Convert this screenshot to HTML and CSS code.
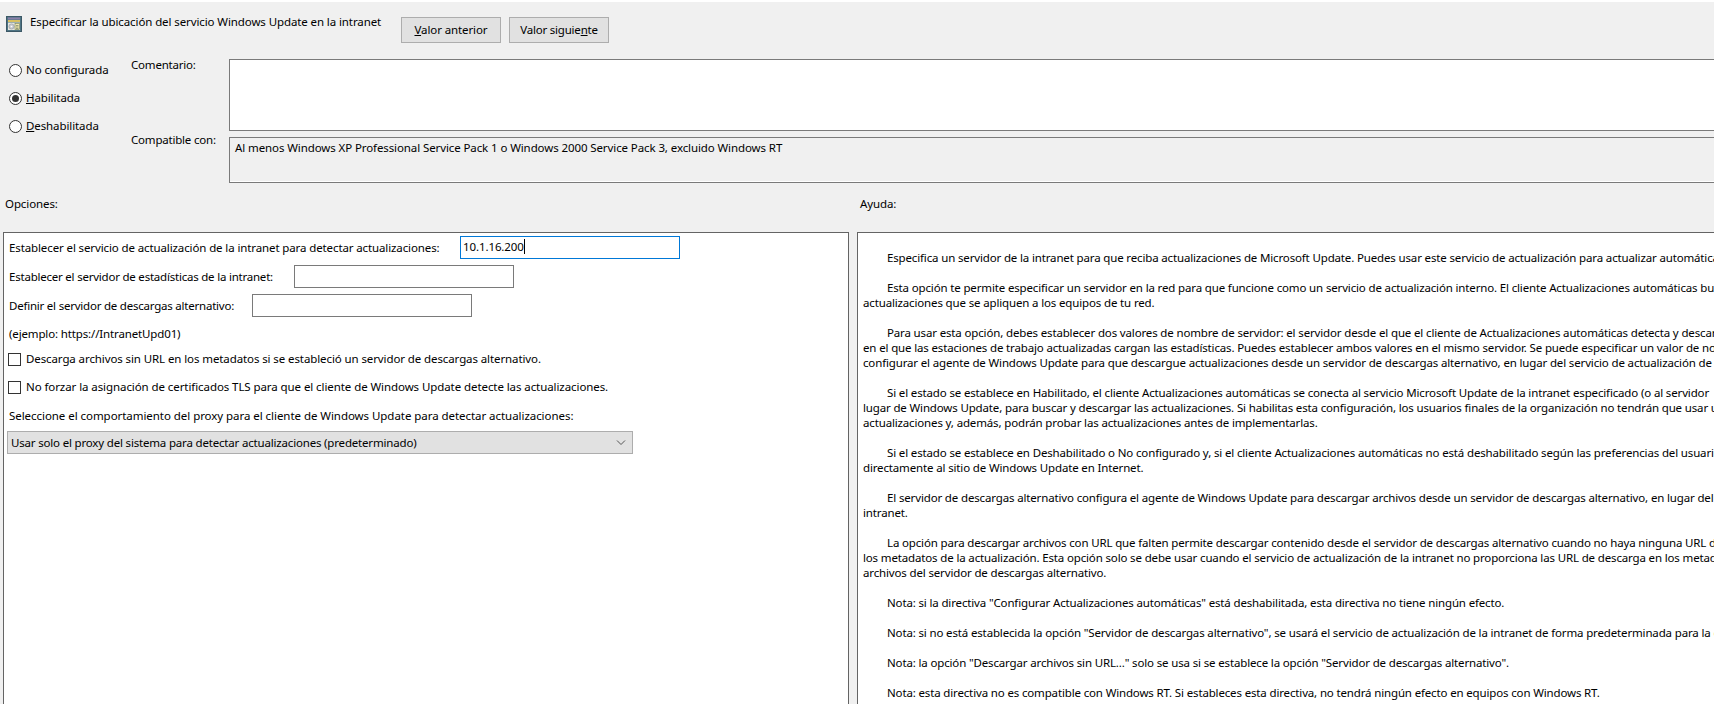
FILE: index.html
```html
<!DOCTYPE html>
<html lang="es">
<head>
<meta charset="utf-8">
<title>Especificar la ubicación del servicio Windows Update en la intranet</title>
<link rel="stylesheet" href="styles.css">
</head>
<body>
<div class="window">
  <header class="header">
    <svg class="policy-icon" width="16" height="16" viewBox="0 0 16 16" aria-hidden="true">
      <rect x="0.5" y="0.5" width="15" height="15" fill="#4f7484" stroke="#3c5866"/>
      <rect x="2" y="1.5" width="12" height="2" fill="#8a7fa8"/>
      <rect x="2" y="4" width="12" height="2" fill="#d8c060"/>
      <rect x="2" y="6.5" width="12" height="7.5" fill="#e8e8e0"/>
      <circle cx="5.5" cy="10.5" r="2.6" fill="#c9ccd0" stroke="#8e9298" stroke-width=".6"/>
      <circle cx="5.5" cy="10.5" r=".8" fill="#fff"/>
      <rect x="9" y="7.5" width="4.5" height="6" fill="#f4e9b0" stroke="#6a7a50" stroke-width=".6"/>
      <path d="M10 9.5h2.5M10 11h2.5M10 12.5h2.5" stroke="#5b6b5a" stroke-width=".6"/>
    </svg>
    <h1 class="title">Especificar la ubicación del servicio Windows Update en la intranet</h1>
    <div class="nav-buttons">
      <button class="btn" type="button"><u>V</u>alor anterior</button>
      <button class="btn btn-tight" type="button">Valor siguie<u>n</u>te</button>
    </div>
  </header>

  <section class="settings">
    <div class="state">
      <label class="radio"><span class="radio-dot"></span><span>No confi<u>g</u>urada</span></label>
      <label class="radio"><span class="radio-dot is-on"></span><span><u>H</u>abilitada</span></label>
      <label class="radio"><span class="radio-dot"></span><span><u>D</u>eshabilitada</span></label>
    </div>
    <div class="meta">
      <div class="meta-label">Comentario:</div>
      <div class="comment"></div>
      <div class="meta-label">Compatible con:</div>
      <div class="compat">Al menos Windows XP Professional Service Pack 1 o Windows 2000 Service Pack 3, excluido Windows RT</div>
    </div>
  </section>

  <div class="captions">
    <div class="caption-left">Opciones:</div>
    <div class="caption-right">Ayuda:</div>
  </div>

  <main class="panels">
    <section class="panel options">
      <div class="field-row"><span class="lbl lbl-1">Establecer el servicio de actualización de la intranet para detectar actualizaciones:</span><div class="input is-focus">10.1.16.200<span class="caret"></span></div></div>
      <div class="field-row"><span class="lbl lbl-2">Establecer el servidor de estadísticas de la intranet:</span><div class="input"></div></div>
      <div class="field-row"><span class="lbl lbl-3">Definir el servidor de descargas alternativo:</span><div class="input"></div></div>
      <div class="note">(ejemplo: https://IntranetUpd01)</div>
      <label class="check"><span class="check-box"></span><span>Descarga archivos sin URL en los metadatos si se estableció un servidor de descargas alternativo.</span></label>
      <label class="check"><span class="check-box"></span><span>No forzar la asignación de certificados TLS para que el cliente de Windows Update detecte las actualizaciones.</span></label>
      <div class="proxy-label">Seleccione el comportamiento del proxy para el cliente de Windows Update para detectar actualizaciones:</div>
      <div class="select">
        <span>Usar solo el proxy del sistema para detectar actualizaciones (predeterminado)</span>
        <svg width="10" height="6" viewBox="0 0 10 6" aria-hidden="true"><path d="M1 .5 5 4.5 9 .5" fill="none" stroke="#555" stroke-width="1"/></svg>
      </div>
    </section>
    <section class="panel help">
      <p class="line first">Especifica un servidor de la intranet para que reciba actualizaciones de Microsoft Update. Puedes usar este servicio de actualización para actualizar automática</p>
      <p class="line">Esta opción te permite especificar un servidor en la red para que funcione como un servicio de actualización interno. El cliente Actualizaciones automáticas bu</p>
      <p class="cont">actualizaciones que se apliquen a los equipos de tu red.</p>
      <p class="line">Para usar esta opción, debes establecer dos valores de nombre de servidor: el servidor desde el que el cliente de Actualizaciones automáticas detecta y descarg</p>
      <p class="cont">en el que las estaciones de trabajo actualizadas cargan las estadísticas. Puedes establecer ambos valores en el mismo servidor. Se puede especificar un valor de nor</p>
      <p class="cont">configurar el agente de Windows Update para que descargue actualizaciones desde un servidor de descargas alternativo, en lugar del servicio de actualización de l</p>
      <p class="line">Si el estado se establece en Habilitado, el cliente Actualizaciones automáticas se conecta al servicio Microsoft Update de la intranet especificado (o al servidor</p>
      <p class="cont">lugar de Windows Update, para buscar y descargar las actualizaciones. Si habilitas esta configuración, los usuarios finales de la organización no tendrán que usar u</p>
      <p class="cont">actualizaciones y, además, podrán probar las actualizaciones antes de implementarlas.</p>
      <p class="line">Si el estado se establece en Deshabilitado o No configurado y, si el cliente Actualizaciones automáticas no está deshabilitado según las preferencias del usuari</p>
      <p class="cont">directamente al sitio de Windows Update en Internet.</p>
      <p class="line">El servidor de descargas alternativo configura el agente de Windows Update para descargar archivos desde un servidor de descargas alternativo, en lugar del s</p>
      <p class="cont">intranet.</p>
      <p class="line">La opción para descargar archivos con URL que falten permite descargar contenido desde el servidor de descargas alternativo cuando no haya ninguna URL d</p>
      <p class="cont">los metadatos de la actualización. Esta opción solo se debe usar cuando el servicio de actualización de la intranet no proporciona las URL de descarga en los metad</p>
      <p class="cont">archivos del servidor de descargas alternativo.</p>
      <p class="line">Nota: si la directiva "Configurar Actualizaciones automáticas" está deshabilitada, esta directiva no tiene ningún efecto.</p>
      <p class="line">Nota: si no está establecida la opción "Servidor de descargas alternativo", se usará el servicio de actualización de la intranet de forma predeterminada para la d</p>
      <p class="line">Nota: la opción "Descargar archivos sin URL..." solo se usa si se establece la opción "Servidor de descargas alternativo".</p>
      <p class="line">Nota: esta directiva no es compatible con Windows RT. Si estableces esta directiva, no tendrá ningún efecto en equipos con Windows RT.</p>
    </section>
  </main>
</div>
</body>
</html>
```
FILE: styles.css
```css
* { box-sizing: border-box; }
html, body { margin: 0; padding: 0; height: 704px; overflow: hidden; }
body { background: #fff; font-family: "Noto Sans", "Open Sans", sans-serif; font-size: 11.5px; line-height: 16px; letter-spacing: -0.1px; color: #000; }

.window { width: 1714px; height: 702px; margin-top: 2px; background: #f0f0f0; overflow: hidden; }

.header { display: flex; align-items: flex-start; height: 54px; padding-left: 6px; }
.policy-icon { margin-top: 14px; flex: none; }
.title { margin: 12px 0 0 8px; width: 350px; flex: none; font-size: inherit; font-weight: 400; line-height: 16px; white-space: nowrap; }
.nav-buttons { display: flex; gap: 8px; margin: 15px 0 0 21px; }
.btn { width: 100px; height: 26px; padding: 0; background: #e1e1e1; border: 1px solid #adadad; font: inherit; letter-spacing: -0.1px; color: #000; }
.btn-tight { letter-spacing: -0.2px; }

.settings { display: flex; width: 1900px; }
.state { width: 131px; padding-left: 9px; flex: none; }
.radio { display: flex; align-items: center; gap: 4px; height: 28px; }
.radio-dot { width: 13px; height: 13px; border: 1px solid #333; border-radius: 50%; background: #fff; flex: none; display: flex; align-items: center; justify-content: center; }
.radio-dot.is-on::after { content: ""; width: 7px; height: 7px; border-radius: 50%; background: #333; }

.meta { flex: 1; display: grid; grid-template-columns: 98px 1fr; grid-template-rows: 75px 52px; }
.meta-label { padding-top: 1px; white-space: nowrap; letter-spacing: -0.2px; }
.comment { margin-top: 3px; height: 72px; background: #fff; border: 1px solid #7a7a7a; }
.compat { margin-top: 6px; height: 46px; padding: 2px 5px; background: #f0f0f0; border: 1px solid #7a7a7a; box-shadow: inset 0 -1px 0 #fff; white-space: nowrap; }

.captions { display: flex; padding-top: 13px; height: 49px; }
.caption-left { width: 860px; padding-left: 5px; }

.panels { display: flex; gap: 8px; margin-left: 3px; width: 1800px; }
.panel { height: 520px; border: 1px solid #646464; background: #fff; flex: none; overflow: hidden; }
.options { width: 846px; padding: 3px 0 0 5px; }
.help { width: 940px; padding: 17px 0 0 5px; letter-spacing: -0.15px; }

.field-row { display: flex; align-items: center; height: 23px; white-space: nowrap; margin-bottom: 6px; }
.lbl { flex: none; }
.lbl-1 { width: 451px; letter-spacing: -0.115px; }
.lbl-2 { width: 285px; letter-spacing: -0.22px; }
.lbl-3 { width: 243px; letter-spacing: -0.22px; }
.input { height: 23px; width: 220px; background: #fff; border: 1px solid #7a7a7a; padding: 2px 2px; flex: none; }
.input.is-focus { border-color: #0078d7; }
.caret { display: inline-block; width: 1px; height: 15px; background: #000; vertical-align: -3px; }
.note { margin-top: 9px; height: 16px; letter-spacing: -0.14px; }
.check { display: flex; align-items: center; gap: 5px; margin: 9px 0 0 -1px; height: 16px; white-space: nowrap; }
.check + .check { margin-top: 12px; letter-spacing: -0.08px; }
.check-box { width: 13px; height: 13px; border: 1px solid #333; background: #fff; flex: none; }
.proxy-label { margin-top: 13px; white-space: nowrap; letter-spacing: -0.05px; }
.select { display: flex; align-items: center; justify-content: space-between; width: 626px; height: 23px; margin: 7px 0 0 -2px; padding: 0 6px 0 3px; background: #e1e1e1; border: 1px solid #adadad; white-space: nowrap; letter-spacing: -0.18px; }

.help p { margin: 0; height: 15px; line-height: 15px; white-space: nowrap; }
.help .line { margin-top: 15px; padding-left: 24px; }
.help .line.first { margin-top: 0; }
```
